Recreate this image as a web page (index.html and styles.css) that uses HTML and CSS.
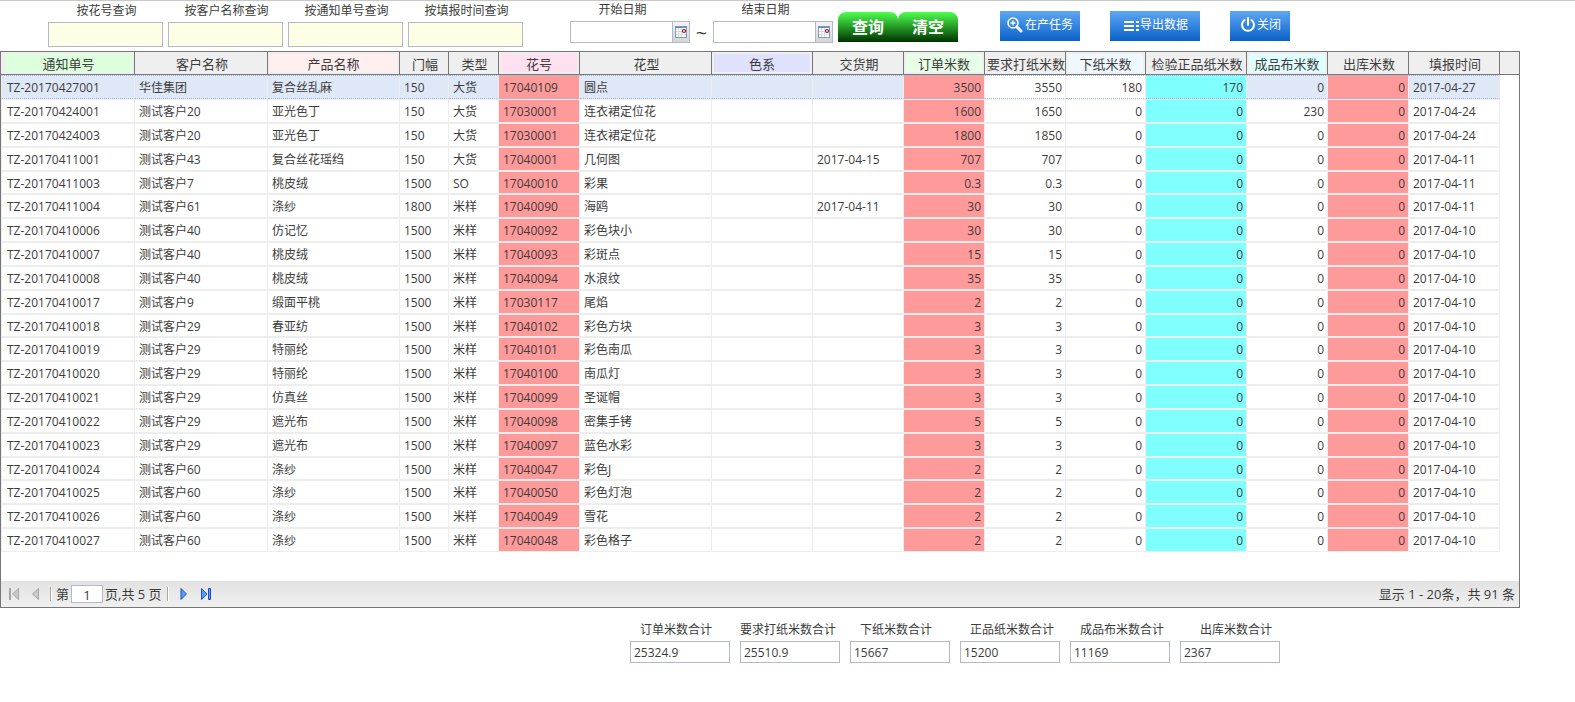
FILE: index.html
```
<!DOCTYPE html>
<html lang="zh-CN">
<head>
<meta charset="utf-8">
<title>在产任务查询</title>
<link rel="stylesheet" href="styles.css">
</head>
<body>
<form class="toolbar">
  <div class="filters">
    <label class="field">按花号查询<input class="filter-input" type="text"></label>
    <label class="field">按客户名称查询<input class="filter-input" type="text"></label>
    <label class="field">按通知单号查询<input class="filter-input" type="text"></label>
    <label class="field">按填报时间查询<input class="filter-input" type="text"></label>
  </div>
  <div class="dates">
    <div class="date-field">
      <label for="date-from">开始日期</label>
      <div class="date-box"><input id="date-from" type="text"><button type="button" aria-label="选择开始日期"><svg width="12" height="12" viewBox="0 0 12 12"><rect x=".5" y=".5" width="11" height="11" fill="#fff" stroke="#7d9cc4"/><path d="M0 0h12v2H0z" fill="#6f94c4"/><path d="M1 5.500h10M1 8.500h10M3.500 2v9M6.500 2v9" stroke="#d5dbe3"/><circle cx="9" cy="5" r="1.500" fill="#fff" stroke="#8b1020" stroke-width="1.200"/></svg></button></div>
    </div>
    <span class="tilde">~</span>
    <div class="date-field">
      <label for="date-to">结束日期</label>
      <div class="date-box"><input id="date-to" type="text"><button type="button" aria-label="选择结束日期"><svg width="12" height="12" viewBox="0 0 12 12"><rect x=".5" y=".5" width="11" height="11" fill="#fff" stroke="#7d9cc4"/><path d="M0 0h12v2H0z" fill="#6f94c4"/><path d="M1 5.500h10M1 8.500h10M3.500 2v9M6.500 2v9" stroke="#d5dbe3"/><circle cx="9" cy="5" r="1.500" fill="#fff" stroke="#8b1020" stroke-width="1.200"/></svg></button></div>
    </div>
  </div>
  <div class="search-actions">
    <button class="btn-green" type="button">查询</button><button class="btn-green" type="button">清空</button>
  </div>
  <div class="actions">
    <button class="btn-blue" type="button"><svg width="16" height="16" viewBox="0 0 16 16" fill="none" stroke="#fff"><circle cx="6" cy="6" r="5" stroke-width="1.600"/><path d="M3.500 6h5M6 3.500v5" stroke-width="1.300"/><path d="M10 10l4 4" stroke-width="3" stroke-linecap="round"/></svg>在产任务</button>
    <button class="btn-blue btn-export" type="button"><svg width="16" height="12" viewBox="0 0 16 12" fill="#fff"><path d="M0 2h10v2H0zM0 6h10v2H0zM0 10h10v2H0zM12 2h3v2h-3zM12 6h3v2h-3zM12 10h3v2h-3z"/></svg>导出数据</button>
    <button class="btn-blue btn-close" type="button"><svg width="16" height="16" viewBox="0 0 16 16" fill="none" stroke="#fff" stroke-width="2" stroke-linecap="round"><path d="M4.500 3a6 6 0 1 0 7 0M8 1v7"/></svg>关闭</button>
  </div>
</form>

<main class="panel">
  <table class="grid">
    <colgroup>
      <col class="w-no"><col class="w-name"><col class="w-product"><col class="w-width"><col class="w-type"><col class="w-num"><col class="w-product"><col class="w-wide"><col class="w-date"><col class="w-num"><col class="w-num"><col class="w-paper"><col class="w-wide"><col class="w-num"><col class="w-num"><col class="w-date"><col>
    </colgroup>
    <thead>
      <tr>
        <th><span class="h-green">通知单号</span></th><th><span>客户名称</span></th><th><span class="h-rose">产品名称</span></th><th><span>门幅</span></th><th><span>类型</span></th><th><span class="h-pink">花号</span></th><th><span>花型</span></th><th><span class="h-violet">色系</span></th><th><span>交货期</span></th><th><span class="h-mint">订单米数</span></th><th><span>要求打纸米数</span></th><th><span class="h-sky">下纸米数</span></th><th><span>检验正品纸米数</span></th><th><span class="h-cyan">成品布米数</span></th><th><span>出库米数</span></th><th><span>填报时间</span></th><th></th>
      </tr>
    </thead>
    <tbody id="rows"></tbody>
  </table>
  <div class="pager">
    <button type="button" aria-label="首页" disabled><svg width="12" height="12" viewBox="0 0 12 12"><path d="M1 0h2v12H1z" fill="#a5a5a5"/><path d="M10.500 .5v11L4.500 6z" fill="#c9c9c9" stroke="#a5a5a5"/></svg></button>
    <button type="button" aria-label="上一页" disabled><svg width="12" height="12" viewBox="0 0 12 12"><path d="M8.500 .5v11L2.500 6z" fill="#c9c9c9" stroke="#a5a5a5"/></svg></button>
    <i class="sep"></i>
    <label class="page-label">第<input class="page-input" type="text" value="1"></label><span>页,共 5 页</span>
    <i class="sep sep-end"></i>
    <button type="button" aria-label="下一页"><svg width="12" height="12" viewBox="0 0 12 12"><path d="M3 .5v11L8.500 6z" fill="#5b9cf5" stroke="#1c50c4"/></svg></button>
    <button type="button" aria-label="末页"><svg width="12" height="12" viewBox="0 0 12 12"><path d="M1.500 .5v11L7 6z" fill="#5b9cf5" stroke="#1c50c4"/><path d="M8.500 .5h2v11h-2z" fill="#5b9cf5" stroke="#1c50c4"/></svg></button>
    <span class="summary">显示 1 - 20条，共 91 条</span>
  </div>
</main>

<section class="totals">
  <label class="total">订单米数合计<input type="text" value="25324.9"></label>
  <label class="total total-long">要求打纸米数合计<input type="text" value="25510.9"></label>
  <label class="total">下纸米数合计<input type="text" value="15667"></label>
  <label class="total">正品纸米数合计<input type="text" value="15200"></label>
  <label class="total">成品布米数合计<input type="text" value="11169"></label>
  <label class="total total-short">出库米数合计<input type="text" value="2367"></label>
</section>
<script src="grid.js"></script>
</body>
</html>
```

FILE: styles.css
```
* { box-sizing: border-box; }

body {
  margin: 0;
  border-top: 1px solid #c8c8c8;
  background: #fff;
  color: #3c3c3c;
  font: 12px/16px "Open Sans", "Noto Sans CJK SC", sans-serif;
}

input, button { font: inherit; color: inherit; }
input { display: block; border: 1px solid #b5b8c8; border-radius: 0; background: #fff; }
button { padding: 0; border: 0; background: none; }
svg { display: block; flex: none; }

/* Toolbar */
.toolbar { display: flex; height: 50px; padding-left: 48px; white-space: nowrap; }
.filters { display: flex; gap: 5px; }
.field { width: 115px; padding-top: 2px; text-align: center; text-indent: 2px; }
.filter-input { width: 100%; height: 25px; margin-top: 3px; background: #ffffe5; }
.dates { display: flex; margin-left: 47px; }
.date-field { width: 120px; padding-top: 1px; }
.date-field label { display: block; padding-right: 15px; text-align: center; }
.date-box { display: flex; height: 22px; margin-top: 3px; border: 1px solid #b5b8c8; }
.date-box input { flex: 1; min-width: 0; border: 0; }
.date-box button {
  display: flex;
  align-items: center;
  justify-content: center;
  width: 17px;
  border-left: 1px solid #b5b8c8;
  background: linear-gradient(#f4f4f4, #d5d5d5);
}
.tilde { width: 23px; padding-top: 24px; text-align: center; font-size: 20px; }
.search-actions { display: flex; margin-left: 5px; padding-top: 11px; }
.btn-green {
  width: 60px;
  height: 30px;
  border-radius: 8px 8px 0 0;
  background: linear-gradient(#4dff4d, #003300);
  color: #fff;
  font-size: 16px;
  font-weight: bold;
}
.actions { display: flex; gap: 30px; margin-left: 42px; padding-top: 10px; }
.btn-blue {
  display: flex;
  align-items: center;
  justify-content: center;
  gap: 2px;
  height: 30px;
  padding: 0 7px 2px;
  background: linear-gradient(#5ea6f4, #0a62c8);
  color: #fff;
}
.btn-export { gap: 0; padding: 0 12px 2px 14px; }
.btn-close { gap: 1px; padding: 0 9px 2px 10px; }

/* Grid */
.panel { margin-right: 55px; border: 1px solid #777; }
.grid { width: 100%; table-layout: fixed; border-spacing: 0; }
.w-no { width: 134px; }
.w-name { width: 133px; }
.w-product { width: 132px; }
.w-width { width: 49px; }
.w-type { width: 50px; }
.w-num { width: 81px; }
.w-wide { width: 101px; }
.w-date { width: 91px; }
.w-paper { width: 80px; }

.grid th {
  height: 23px;
  padding: 2px 1px 2px 2px;
  border-right: 1px solid #777;
  border-bottom: 1px solid #777;
  background: #efefef;
  font-size: 13px;
  font-weight: normal;
  white-space: nowrap;
}
.grid th:last-child { border-right: 0; }
.grid th span { display: block; height: 18px; margin: 0 -1px 0 0; line-height: 20px; }
.grid th span[class] { margin: 0 1px 0 0; }
.grid th:first-child span { margin-left: 2px; }
.h-green { background: #dcffdc; }
.h-rose { background: #ffefee; }
.h-pink { background: #ffe0f0; }
.h-violet { background: #e0e0ff; }
.h-mint { background: #e6ffe6; }
.h-sky { background: #f0f8ff; }
.h-cyan { background: #e0ffff; }

.grid td {
  height: 24px;
  padding: 2px 5px 0 4px;
  border: solid #ededed;
  border-width: 1px 1px 1px 0;
  line-height: 16px;
  white-space: nowrap;
}
.grid tr:nth-child(6n+5) td { height: 23px; }
.grid td:first-child { padding-left: 5px; border-left-width: 1px; }
.grid td:last-child { border: 0; }
.grid td.num { padding: 2px 3px 0; text-align: right; }
.grid .selected td:not(:last-child) {
  border-top: 1px dotted #a3bae9;
  border-bottom: 1px dotted #a3bae9;
  background: #dfe8f6;
}
.grid tbody td.red, .grid .selected td.red:not(:last-child) { background: #ff9a9a; }
.grid tbody td.cyan, .grid .selected td.cyan:not(:last-child) { background: #80ffff; }
.grid .selected td.plain:not(:last-child) { background: #fff; }

/* Pager */
.pager {
  display: flex;
  align-items: center;
  height: 26px;
  margin-top: 29px;
  padding: 0 4px 0 7px;
  background: linear-gradient(#e2e2e2, #f0f0f0);
  font-size: 13px;
}
.pager button { width: 12px; margin-right: 10px; }
.sep { width: 2px; height: 14px; margin: 0 4px 0 -2px; border-left: 1px solid #aca899; border-right: 1px solid #fff; }
.sep-end { margin: 0 9px 0 5px; }
.page-label { display: flex; align-items: center; gap: 2px; }
.page-input { width: 32px; height: 18px; margin-right: 2px; padding: 2px 0 0; text-align: center; }
.summary { margin-left: auto; }

/* Totals */
.totals { display: flex; gap: 10px; margin: 14px 0 0 630px; white-space: nowrap; }
.total { width: 100px; text-indent: 10px; }
.total-long { text-indent: 0; }
.total-short { text-indent: 20px; }
.total input { width: 100%; height: 22px; margin-top: 3px; padding: 0 3px; text-indent: 0; }
```

FILE: grid.js
```
const rows = [
  ["TZ-20170427001", "华佳集团", "复合丝乱麻", "150", "大货", "17040109", "圆点", "", "", "3500", "3550", "180", "170", "0", "0", "2017-04-27"],
  ["TZ-20170424001", "测试客户20", "亚光色丁", "150", "大货", "17030001", "连衣裙定位花", "", "", "1600", "1650", "0", "0", "230", "0", "2017-04-24"],
  ["TZ-20170424003", "测试客户20", "亚光色丁", "150", "大货", "17030001", "连衣裙定位花", "", "", "1800", "1850", "0", "0", "0", "0", "2017-04-24"],
  ["TZ-20170411001", "测试客户43", "复合丝花瑶绉", "150", "大货", "17040001", "几何图", "", "2017-04-15", "707", "707", "0", "0", "0", "0", "2017-04-11"],
  ["TZ-20170411003", "测试客户7", "桃皮绒", "1500", "SO", "17040010", "彩果", "", "", "0.3", "0.3", "0", "0", "0", "0", "2017-04-11"],
  ["TZ-20170411004", "测试客户61", "涤纱", "1800", "米样", "17040090", "海鸥", "", "2017-04-11", "30", "30", "0", "0", "0", "0", "2017-04-11"],
  ["TZ-20170410006", "测试客户40", "仿记忆", "1500", "米样", "17040092", "彩色块小", "", "", "30", "30", "0", "0", "0", "0", "2017-04-10"],
  ["TZ-20170410007", "测试客户40", "桃皮绒", "1500", "米样", "17040093", "彩斑点", "", "", "15", "15", "0", "0", "0", "0", "2017-04-10"],
  ["TZ-20170410008", "测试客户40", "桃皮绒", "1500", "米样", "17040094", "水浪纹", "", "", "35", "35", "0", "0", "0", "0", "2017-04-10"],
  ["TZ-20170410017", "测试客户9", "缎面平桃", "1500", "米样", "17030117", "尾焰", "", "", "2", "2", "0", "0", "0", "0", "2017-04-10"],
  ["TZ-20170410018", "测试客户29", "春亚纺", "1500", "米样", "17040102", "彩色方块", "", "", "3", "3", "0", "0", "0", "0", "2017-04-10"],
  ["TZ-20170410019", "测试客户29", "特丽纶", "1500", "米样", "17040101", "彩色南瓜", "", "", "3", "3", "0", "0", "0", "0", "2017-04-10"],
  ["TZ-20170410020", "测试客户29", "特丽纶", "1500", "米样", "17040100", "南瓜灯", "", "", "3", "3", "0", "0", "0", "0", "2017-04-10"],
  ["TZ-20170410021", "测试客户29", "仿真丝", "1500", "米样", "17040099", "圣诞帽", "", "", "3", "3", "0", "0", "0", "0", "2017-04-10"],
  ["TZ-20170410022", "测试客户29", "遮光布", "1500", "米样", "17040098", "密集手铐", "", "", "5", "5", "0", "0", "0", "0", "2017-04-10"],
  ["TZ-20170410023", "测试客户29", "遮光布", "1500", "米样", "17040097", "蓝色水彩", "", "", "3", "3", "0", "0", "0", "0", "2017-04-10"],
  ["TZ-20170410024", "测试客户60", "涤纱", "1500", "米样", "17040047", "彩色J", "", "", "2", "2", "0", "0", "0", "0", "2017-04-10"],
  ["TZ-20170410025", "测试客户60", "涤纱", "1500", "米样", "17040050", "彩色灯泡", "", "", "2", "2", "0", "0", "0", "0", "2017-04-10"],
  ["TZ-20170410026", "测试客户60", "涤纱", "1500", "米样", "17040049", "雪花", "", "", "2", "2", "0", "0", "0", "0", "2017-04-10"],
  ["TZ-20170410027", "测试客户60", "涤纱", "1500", "米样", "17040048", "彩色格子", "", "", "2", "2", "0", "0", "0", "0", "2017-04-10"]
];

const columnClass = {
  5: "red", 9: "num red", 10: "num plain", 11: "num plain",
  12: "num cyan", 13: "num", 14: "num red"
};

const body = document.getElementById("rows");
rows.forEach((row, index) => {
  const tr = body.insertRow();
  if (index === 0) tr.className = "selected";
  row.forEach((value, column) => {
    const td = tr.insertCell();
    td.textContent = value;
    if (columnClass[column]) td.className = columnClass[column];
  });
  tr.insertCell();
});
```
